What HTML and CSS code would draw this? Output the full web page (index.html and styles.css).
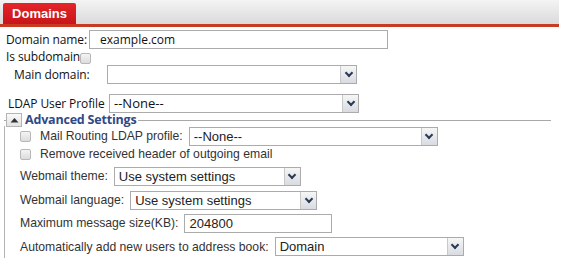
FILE: index.html
```html
<!DOCTYPE html>
<html lang="en">
<head>
  <meta charset="UTF-8">
  <title>Domains</title>
  <link rel="stylesheet" href="styles.css">
</head>
<body>
<div class="tabbar">
  <div class="tab">Domains</div>
</div>

<div class="form">
  <div class="row r-name">
    <span class="lbl">Domain name:</span>
    <div class="input w-name">example.com</div>
  </div>
  <div class="row r-sub">
    <span class="lbl">Is subdomain</span>
    <span class="check"></span>
  </div>
  <div class="row r-main">
    <span class="lbl">Main domain:</span>
    <div class="select w-main"><span></span><i class="arrow"></i></div>
  </div>
  <div class="row r-ldap">
    <span class="lbl">LDAP User Profile</span>
    <div class="select w-ldap"><span>--None--</span><i class="arrow"></i></div>
  </div>

  <div class="adv">
    <div class="legend">
      <span class="toggle"><svg width="9" height="6" viewBox="0 0 9 6"><path d="M0.5 5.5 L4.5 1 L8.5 5.5 Z" fill="#333"/></svg></span>
      <span class="legend-text">Advanced Settings</span>
    </div>
    <div class="adv-body">
      <div class="arow a-route">
        <span class="check"></span>
        <span class="albl">Mail Routing LDAP profile:</span>
        <div class="select w-route"><span>--None--</span><i class="arrow"></i></div>
      </div>
      <div class="arow a-remove">
        <span class="check"></span>
        <span class="albl">Remove received header of outgoing email</span>
      </div>
      <div class="arow a-theme">
        <span class="albl">Webmail theme:</span>
        <div class="select w-theme"><span>Use system settings</span><i class="arrow"></i></div>
      </div>
      <div class="arow a-lang">
        <span class="albl">Webmail language:</span>
        <div class="select w-lang"><span>Use system settings</span><i class="arrow"></i></div>
      </div>
      <div class="arow a-size">
        <span class="albl">Maximum message size(KB):</span>
        <div class="input w-size">204800</div>
      </div>
      <div class="arow a-book">
        <span class="albl">Automatically add new users to address book:</span>
        <div class="select w-book"><span>Domain</span><i class="arrow"></i></div>
      </div>
    </div>
  </div>
</div>
</body>
</html>
```

FILE: styles.css
```css
* {
  margin: 0;
  padding: 0;
  box-sizing: border-box;
}

body {
  background: #fff;
  font-family: "Open Sans", "Noto Sans", sans-serif;
  color: #222;
  width: 576px;
  height: 258px;
  overflow: hidden;
}

/* Tab strip */
.tabbar {
  width: 559px;
  height: 27px;
  padding: 3px 0 0 3px;
  background: linear-gradient(to bottom, #f4f4f4, #dadada);
  border-bottom: 3px solid #c83a22;
}

.tab {
  width: 73px;
  height: 21px;
  background: linear-gradient(to bottom, #e4262a, #c8141a);
  border-radius: 2px 2px 0 0;
  color: #fff;
  font-family: "Liberation Sans", Arial, sans-serif;
  font-weight: bold;
  font-size: 13px;
  line-height: 21px;
  text-align: center;
}

/* Top part of the form */
.form {
  padding-top: 3px;
}

.row {
  display: flex;
  align-items: center;
  font-size: 12px;
  color: #111;
  white-space: nowrap;
}

.lbl {
  flex-shrink: 0;
  letter-spacing: -0.1px;
}

.r-name { height: 19px; padding-left: 6px; }
.r-sub { height: 15px; padding-left: 6px; }
.r-main { height: 20px; padding-left: 14px; }
.r-ldap { height: 20px; padding-left: 8px; margin-top: 9px; }

.r-name .lbl { width: 83px; }
.r-sub .check { margin-top: 4px; }
.r-main .lbl { width: 93px; }
.r-ldap .lbl { width: 101px; }

.input,
.select {
  flex-shrink: 0;
  height: 19px;
  border: 1px solid #ababab;
  background: #fff;
  font-size: 12px;
  line-height: 17px;
  white-space: nowrap;
  overflow: hidden;
}

.input {
  padding-left: 10px;
}

.select {
  display: flex;
}

.select span {
  flex: 1;
  padding-left: 4px;
}

.arrow {
  width: 16px;
  height: 17px;
  background: linear-gradient(to bottom, #f6f6f6, #d8dbe0);
  border-left: 1px solid #c8c8c8;
  display: flex;
  align-items: center;
  justify-content: center;
}

.arrow::after {
  content: "";
  width: 4px;
  height: 4px;
  border-right: 2px solid #2b3a55;
  border-bottom: 2px solid #2b3a55;
  transform: rotate(45deg);
  margin-top: -3px;
}

.w-name { width: 299px; font-size: 12px; }
.w-main { width: 250px; }
.w-ldap { width: 250px; font-size: 13px; }

.check {
  display: inline-block;
  flex-shrink: 0;
  width: 11px;
  height: 11px;
  border: 1px solid #b8b8b8;
  border-radius: 2px;
  background: linear-gradient(to bottom, #f4f4f4, #dcdcdc);
}

/* Advanced settings block */
.legend {
  display: flex;
  align-items: center;
  height: 14px;
  padding-left: 6px;
  position: relative;
}

.legend::before {
  content: "";
  position: absolute;
  left: 4px;
  top: 7px;
  width: 547px;
  border-top: 1px solid #a8a8a8;
}

.toggle {
  position: relative;
  width: 16px;
  height: 14px;
  border: 1px solid #b4b4b4;
  background: linear-gradient(to bottom, #fafafa, #e2e2e2);
  display: flex;
  align-items: center;
  justify-content: center;
}

.legend-text {
  position: relative;
  background: #fff;
  padding: 0 2px 0 3px;
  color: #2f4a86;
  font-weight: bold;
  font-size: 12.5px;
  line-height: 14px;
  letter-spacing: -0.2px;
}

.adv-body {
  margin-left: 4px;
  border-left: 1px solid #b4b4b4;
  padding-left: 15px;
  height: 140px;
}

.arow {
  display: flex;
  align-items: center;
  font-family: "Liberation Sans", Arial, sans-serif;
  font-size: 12.2px;
  color: #333;
  white-space: nowrap;
}

.arow .check { margin-right: 9px; }

.a-route { height: 20px; margin-top: -1px; }
.a-remove { height: 14px; margin-top: 1px; }
.a-theme { height: 20px; margin-top: 5px; }
.a-lang { height: 20px; margin-top: 4px; }
.a-size { height: 20px; margin-top: 3px; }
.a-book { height: 19px; margin-top: 4px; }

.albl { margin-right: 6px; flex-shrink: 0; }

.arow .select, .arow .input {
  font-family: "Liberation Sans", Arial, sans-serif;
  font-size: 13px;
  color: #222;
}

.w-route { width: 249px; }
.w-theme { width: 187px; }
.w-lang { width: 187px; }
.w-size { width: 148px; padding-left: 4px; }
.w-book { width: 189px; }
```
